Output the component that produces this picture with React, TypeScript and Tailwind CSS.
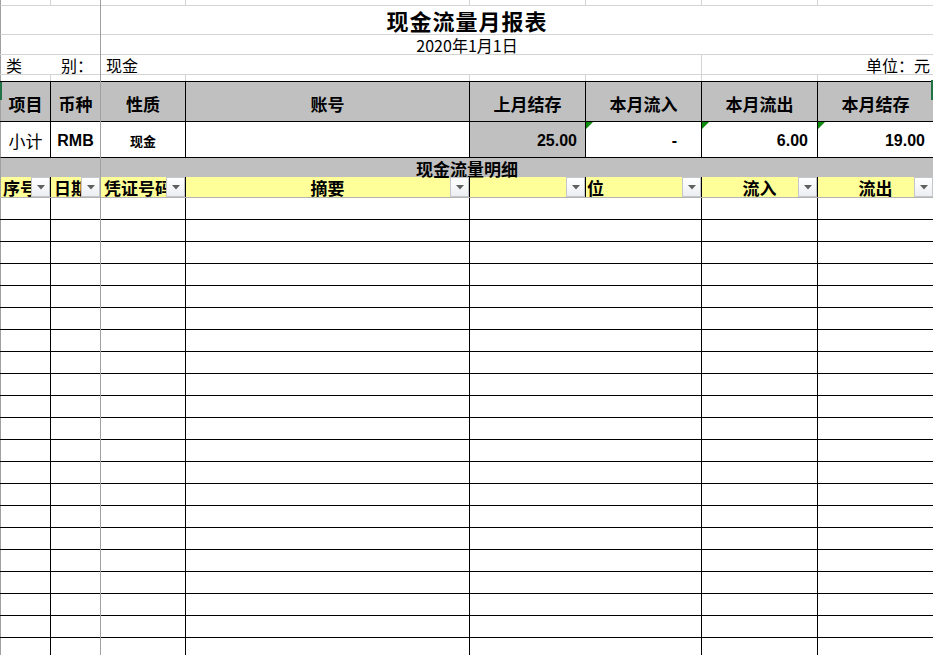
import * as React from "react";

const cjk = { fontFamily: '"Noto Sans CJK SC", "Noto Sans", sans-serif' };
const latin = { fontFamily: '"Liberation Sans", "Noto Sans CJK SC", sans-serif' };

const cols8 = "grid grid-cols-[50px_50px_85px_284px_116px_116px_116px_116px]";
const cols7 = "grid grid-cols-[50px_50px_85px_284px_232px_116px_116px]";

const FilterButton: React.FC = () => (
  <div className="absolute right-0 top-0 flex h-[20px] w-[19px] items-center justify-center border border-[#c3c6cb] bg-gradient-to-b from-white to-[#eceef2]">
    <svg width="8" height="5" viewBox="0 0 8 5">
      <polygon points="0,0 8,0 4,4.5" fill="#5f5f5f" />
    </svg>
  </div>
);

const ErrorMark: React.FC = () => (
  <svg className="absolute left-0 top-0" width="7" height="7" viewBox="0 0 7 7">
    <polygon points="0,0 7,0 0,7" fill="#0b8a0b" />
  </svg>
);

const headers = ["项目", "币种", "性质", "账号", "上月结存", "本月流入", "本月流出", "本月结存"];

const filters: { label: string; align: string }[] = [
  { label: "序号", align: "justify-start pl-[2px]" },
  { label: "日期", align: "justify-start pl-[3px]" },
  { label: "凭证号码", align: "justify-start pl-[3px]" },
  { label: "摘要", align: "justify-center" },
  { label: "", align: "justify-center" },
  { label: "位", align: "justify-start pl-[1px]" },
  { label: "流入", align: "justify-center" },
  { label: "流出", align: "justify-center" },
];

export default function App() {
  const rows = Array.from({ length: 21 }, (_, i) => i);

  return (
    <div className="relative h-[655px] w-[933px] overflow-hidden bg-white text-black" style={cjk}>
      {/* top gridline strip */}
      <div className={`${cols8} h-[5px]`}>
        {headers.map((h, i) => (
          <div key={h} className={i === 0 ? "border-l border-[#a0a0a0]" : "border-l border-[#d4d4d4]"} />
        ))}
      </div>

      {/* title */}
      <div className="flex h-[29px] items-center justify-center border-l border-t border-l-[#a0a0a0] border-t-[#d4d4d4] text-[22px] font-bold leading-none tracking-[1px]">
        现金流量月报表
      </div>

      {/* date */}
      <div className="flex h-[20px] items-end justify-center border-l border-t border-l-[#a0a0a0] border-t-[#d4d4d4] pb-[1px] text-[16px] leading-none">
        2020年1月1日
      </div>

      {/* category */}
      <div className="grid h-[20px] grid-cols-[100px_601px_232px] border-t border-[#d4d4d4] text-[16px] leading-none">
        <div className="flex items-end justify-between border-l border-[#a0a0a0] pb-[1px] pl-[5px] pr-[7px]">
          <span>类</span>
          <span>别：</span>
        </div>
        <div className="flex items-end border-l border-[#d4d4d4] pb-[1px] pl-[5px]">现金</div>
        <div className="flex items-end justify-end border-l border-[#d4d4d4] pb-[1px] pr-[3px]">单位：元</div>
      </div>

      {/* spacer row */}
      <div className={`${cols8} h-[7px] border-t border-[#d4d4d4]`}>
        {headers.map((h, i) => (
          <div key={h} className={i === 0 ? "border-l border-[#a0a0a0]" : "border-l border-[#d4d4d4]"} />
        ))}
      </div>

      {/* header row */}
      <div className={`${cols8} h-[40px] border-t border-black bg-[#c0c0c0]`}>
        {headers.map((h, i) => (
          <div
            key={h}
            className={`flex items-center justify-center pt-[3px] text-[17px] font-bold leading-none ${
              i === 0 ? "border-l border-[#a0a0a0]" : "border-l border-black"
            }`}
          >
            {h}
          </div>
        ))}
      </div>

      {/* value row */}
      <div className={`${cols8} h-[36px] border-t border-black text-[16px] leading-none`}>
        <div className="flex items-center justify-center border-l border-[#a0a0a0] pt-[2px] text-[17px]">小计</div>
        <div className="flex items-center justify-center border-l border-black pt-[2px] font-bold" style={latin}>
          RMB
        </div>
        <div className="flex items-center justify-center border-l border-black pt-[2px] text-[13px] font-bold">现金</div>
        <div className="border-l border-black" />
        <div className="flex items-center justify-end border-l border-black bg-[#c0c0c0] pr-[8px] pt-[2px] font-bold" style={latin}>
          25.00
        </div>
        <div className="relative flex items-center justify-end border-l border-black pr-[24px] pt-[2px] font-bold" style={latin}>
          <ErrorMark />-
        </div>
        <div className="relative flex items-center justify-end border-l border-black pr-[9px] pt-[2px] font-bold" style={latin}>
          <ErrorMark />
          6.00
        </div>
        <div className="relative flex items-center justify-end border-l border-black pr-[8px] pt-[2px] font-bold" style={latin}>
          <ErrorMark />
          19.00
        </div>
      </div>

      {/* section title */}
      <div className="flex h-[20px] items-center justify-center border-l border-t border-l-[#a0a0a0] border-t-black bg-[#c0c0c0] pt-[1px] text-[17px] font-bold leading-none">
        现金流量明细
      </div>

      {/* filter row */}
      <div className={`${cols8} h-[20px] bg-[#ffff99]`}>
        {filters.map((f, i) => (
          <div
            key={i}
            className={`relative flex items-end overflow-hidden whitespace-nowrap text-[17px] font-bold leading-none ${f.align} ${
              i === 0 ? "border-l border-[#a0a0a0]" : "border-l border-black"
            }`}
          >
            <span className="pb-[1px]">{f.label}</span>
            <FilterButton />
          </div>
        ))}
      </div>

      {/* data rows */}
      {rows.map((r) => (
        <div key={r} className={`${cols7} h-[22px] border-t ${r === 0 ? "border-[#b4b4b4]" : "border-black"}`}>
          {Array.from({ length: 7 }, (_, c) => (
            <div key={c} className={c === 0 ? "border-l border-[#a0a0a0]" : "border-l border-black"} />
          ))}
        </div>
      ))}

      {/* frozen pane divider and selection marks */}
      <div className="absolute bottom-0 left-[100px] top-0 w-px bg-[#a0a0a0]" />
      <div className="absolute left-0 top-[82px] h-[18px] w-[2px] bg-[#217346]" />
      <div className="absolute right-0 top-[80px] h-[20px] w-[2px] bg-[#217346]" />
    </div>
  );
}
